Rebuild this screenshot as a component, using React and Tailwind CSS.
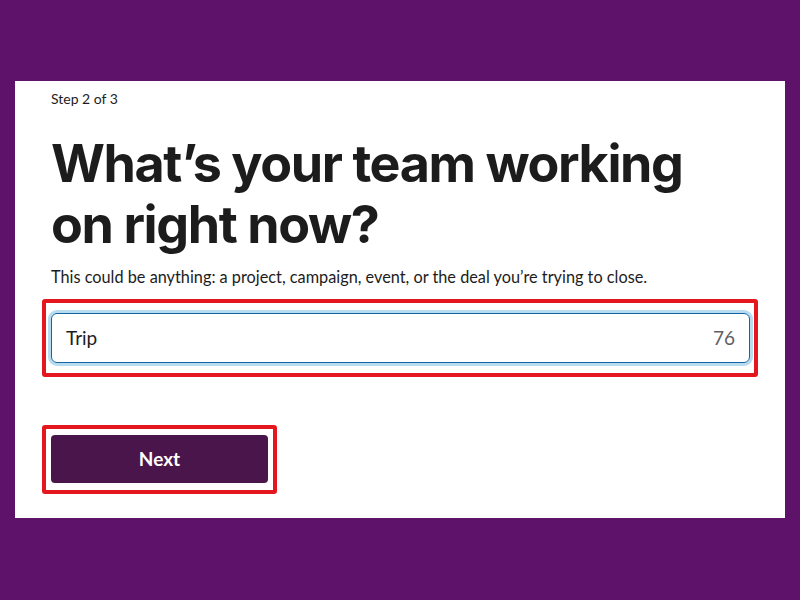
export default function App() {
  return (
    <div className="w-[800px] h-[600px] bg-[#5f1269] pt-[81px] px-[15px]" style={{ fontFamily: "Lato, 'Liberation Sans', sans-serif" }}>
      <div className="bg-white h-[437px] pl-[27px] pr-[27px] pt-[10px]">
        <div className="ml-[9px] text-[14px] leading-[16px] text-[#1d1c1d]">Step 2 of 3</div>
        <h1 className="ml-[9px] mt-[26px] text-[52px] leading-[61px] font-bold text-[#1d1c1d] tracking-[-1.4px]" style={{ fontFamily: "Inter, 'Liberation Sans', sans-serif" }}>
          What’s your team working<br />on right now?
        </h1>
        <p className="ml-[9px] mt-[12px] text-[16.3px] leading-[20px] text-[#1d1c1d]">
          This could be anything: a project, campaign, event, or the deal you’re trying to close.
        </p>
        <div className="mt-[12px] w-[716px] h-[78px] border-[4px] border-[#e3171d] rounded-[3px] pl-[5px] pr-[4px] pt-[10px]">
          <div className="h-[50px] border border-[#1264a3] rounded-[6px] ring-[3px] ring-[#b7dcef] flex items-center justify-between px-[14px] text-[19px]">
            <span className="text-[#1d1c1d]">Trip</span>
            <span className="text-[#616061]">76</span>
          </div>
        </div>
        <div className="mt-[48px] w-[235px] h-[69px] border-[4px] border-[#e3171d] rounded-[3px] pl-[5px] pt-[6px]">
          <div className="w-[217px] h-[48px] bg-[#4a154b] rounded-[4px] flex items-center justify-center text-white text-[19px] font-bold">
            Next
          </div>
        </div>
      </div>
    </div>
  );
}
